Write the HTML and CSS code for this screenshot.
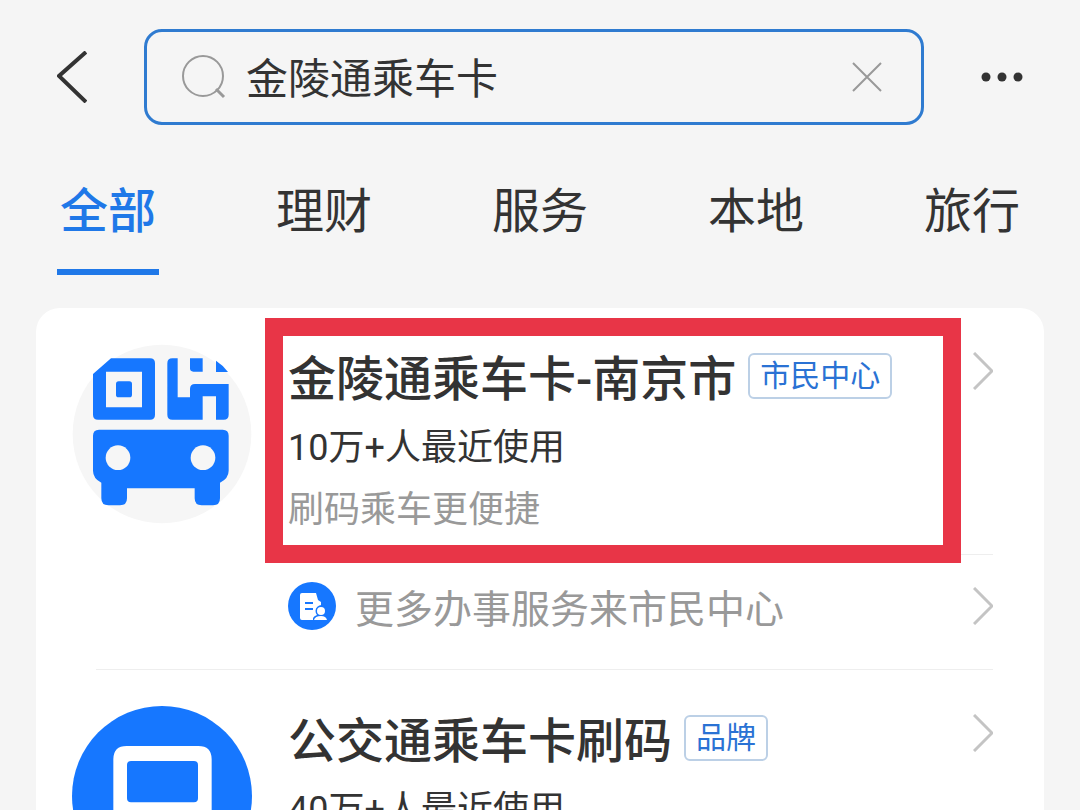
FILE: index.html
```html
<!DOCTYPE html>
<html lang="zh-CN">
<head>
    <meta charset="UTF-8">
    <meta name="viewport" content="width=device-width, initial-scale=1.0">
    <title>搜索</title>
    <link rel="stylesheet" href="styles.css">
</head>
<body>
    <div class="page">
        <!-- Search header -->
        <header class="header">
            <button class="icon-btn" aria-label="返回">
                <svg width="30" height="52" viewBox="0 0 30 52"><path d="M29 1 L2 25 L29 51" fill="none" stroke="#333" stroke-width="4"/></svg>
            </button>
            <form class="search-box" role="search">
                <svg class="search-icon" width="44" height="44" viewBox="0 0 44 44" fill="none" stroke="#999" stroke-width="2">
                    <circle cx="21" cy="21" r="20"/>
                    <path d="M34 34 L42 42" stroke-width="3"/>
                </svg>
                <input class="search-input" type="text" aria-label="搜索" value="金陵通乘车卡">
                <button class="icon-btn" type="reset" aria-label="清除">
                    <svg width="32" height="32" viewBox="0 0 32 32"><path d="M2 2 L30 30 M30 2 L2 30" stroke="#999" stroke-width="2"/></svg>
                </button>
            </form>
            <button class="icon-btn" aria-label="更多">
                <svg width="42" height="10" viewBox="0 0 42 10" fill="#333"><circle cx="5" cy="5" r="4.5"/><circle cx="21" cy="5" r="4.5"/><circle cx="37" cy="5" r="4.5"/></svg>
            </button>
        </header>

        <!-- Category tabs -->
        <nav class="tabs">
            <a class="tab active" href="#all">全部</a>
            <a class="tab" href="#finance">理财</a>
            <a class="tab" href="#service">服务</a>
            <a class="tab" href="#local">本地</a>
            <a class="tab" href="#travel">旅行</a>
        </nav>

        <!-- Results -->
        <main class="results">
            <article class="result">
                <svg class="result-icon" viewBox="36 102 540 540">
                    <circle cx="306" cy="372" r="268" fill="#f6f6f6"/>
                    <g fill="#1677ff">
                        <path fill-rule="evenodd" d="M153 145 H270 Q285 145 285 160 V314 Q285 329 270 329 H114 Q99 329 99 314 V192 Z M138 185 V292 H246 V185 Z"/>
                        <rect x="168" y="214" width="48" height="48" rx="8"/>
                        <path d="M337 145 H353 V262 H390 V237 Q390 222 405 222 H506 V314 Q506 329 491 329 H468 V259 H428 V329 H337 Q322 329 322 314 V160 Q322 145 337 145 Z"/>
                        <path d="M390 145 H428 V185 H400 Q390 185 390 175 Z"/>
                        <path d="M468 152 Q490 166 504 186 H468 Z"/>
                        <path d="M117 359 H488 Q506 359 506 377 V482 Q506 505 480 518 V565 Q480 586 459 586 H425 Q404 586 404 565 V535 H201 V565 Q201 586 180 586 H145 Q124 586 124 565 V518 Q99 505 99 482 V377 Q99 359 117 359 Z"/>
                    </g>
                    <g fill="#f6f6f6"><circle cx="174" cy="443" r="37"/><circle cx="429" cy="443" r="37"/></g>
                </svg>
                <div class="result-body">
                    <div class="result-info highlight">
                        <h2 class="result-title">金陵通乘车卡-南京市<span class="tag">市民中心</span></h2>
                        <p class="result-count">10万+人最近使用</p>
                        <p class="result-desc">刷码乘车更便捷</p>
                    </div>
                    <svg class="chevron" width="20" height="38" viewBox="0 0 20 38"><path d="M1 1 L19 19 L1 37"/></svg>
                </div>
                <a class="more" href="#civic">
                    <svg width="48" height="48" viewBox="0 0 48 48">
                        <circle cx="24" cy="24" r="24" fill="#1677ff"/>
                        <path d="M14 11 H28 L30 18 L33 20 V38 H14 Q12 38 12 36 V13 Q12 11 14 11 Z" fill="#fff"/>
                        <path d="M17 21 H25 M17 27 H25" stroke="#1677ff" stroke-width="2"/>
                        <path d="M25 40 V36 Q26 34 29 33 A6 6 0 1 1 38 33 Q41 34 41 38 V40 Z" fill="#1677ff"/>
                        <circle cx="33" cy="29" r="4" fill="#fff"/>
                        <path d="M26 38 Q27 34 33 34 Q38 34 39 38 Z" fill="#fff"/>
                    </svg>
                    <span class="more-text">更多办事服务来市民中心</span>
                    <svg class="chevron" width="20" height="38" viewBox="0 0 20 38"><path d="M1 1 L19 19 L1 37"/></svg>
                </a>
            </article>

            <article class="result">
                <svg class="result-icon" viewBox="126 138 540 540">
                    <circle cx="396" cy="408" r="270" fill="#1677ff"/>
                    <path fill-rule="evenodd" fill="#fff" d="M290 258 H505 Q545 258 545 298 V550 H515 V580 H465 V550 H330 V580 H280 V550 H250 V298 Q250 258 290 258 Z M303 303 Q291 303 291 315 V415 Q291 427 303 427 H492 Q504 427 504 415 V315 Q504 303 492 303 Z"/>
                    <g fill="#1677ff"><circle cx="315" cy="490" r="20"/><circle cx="480" cy="490" r="20"/></g>
                </svg>
                <div class="result-body">
                    <div class="result-info">
                        <h2 class="result-title">公交通乘车卡刷码<span class="tag">品牌</span></h2>
                        <p class="result-count">40万+人最近使用</p>
                    </div>
                    <svg class="chevron" width="20" height="38" viewBox="0 0 20 38"><path d="M1 1 L19 19 L1 37"/></svg>
                </div>
            </article>
        </main>
    </div>
</body>
</html>
```
FILE: styles.css
```css
:root {
    --page-bg: #f5f5f5;
    --blue: #1f78e8;
    --text: #333333;
    --muted: #999999;
    --line: #eeeeee;
    --mark: #e83547;
}

* {
    box-sizing: border-box;
    margin: 0;
    padding: 0;
}

body {
    font-family: Roboto, "Noto Sans CJK SC", sans-serif;
    background: var(--page-bg);
    color: var(--text);
}

a {
    color: inherit;
    text-decoration: none;
}

svg {
    display: block;
    flex-shrink: 0;
}

.page {
    display: flex;
    flex-direction: column;
    height: 100vh;
    overflow: hidden;
}

/* Search header */
.header {
    display: flex;
    align-items: center;
    gap: 57px;
    padding: 29px 57px 0;
}

.icon-btn {
    border: none;
    background: none;
    cursor: pointer;
}

.search-box {
    flex: 1;
    min-width: 0;
    display: flex;
    align-items: center;
    gap: 20px;
    height: 96px;
    padding: 0 38px 0 35px;
    border: 3px solid #2f7bd0;
    border-radius: 18px;
}

.search-input {
    flex: 1;
    min-width: 0;
    padding-top: 6px;
    border: none;
    outline: none;
    background: none;
    color: var(--text);
    font-family: inherit;
    font-size: 42px;
    line-height: 60px;
}

/* Tabs */
.tabs {
    display: flex;
    justify-content: space-between;
    padding: 54px 57px 33px;
}

.tab {
    padding: 0 3px 24px;
    border-bottom: 6px solid transparent;
    font-size: 48px;
    line-height: 66px;
}

.tab.active {
    color: var(--blue);
    border-color: var(--blue);
    font-weight: 500;
}

/* Results card */
.results {
    flex: 1;
    margin: 0 36px;
    background: #fff;
    border-radius: 24px 24px 0 0;
}

.result {
    display: grid;
    grid-template-columns: 180px 1fr;
    column-gap: 36px;
    padding: 34px 51px 0 36px;
}

.result + .result {
    position: relative;
    padding-top: 35px;
}

/* Divider starts inside the icon column */
.result + .result::before {
    content: "";
    position: absolute;
    top: 0;
    left: 60px;
    right: 51px;
    border-top: 1px solid var(--line);
}

.result-icon {
    width: 180px;
    height: 180px;
    margin-top: 2px;
}

.result-body {
    display: flex;
    justify-content: space-between;
    padding-bottom: 12px;
    border-bottom: 1px solid var(--line);
}

.result-body .chevron {
    margin-top: 10px;
}

.result-title {
    display: flex;
    align-items: flex-start;
    gap: 12px;
    font-size: 48px;
    font-weight: 500;
    line-height: 76px;
    white-space: nowrap;
}

.tag {
    margin-top: 11px;
    padding: 0 10px;
    border: 2px solid #bcd0e6;
    border-radius: 6px;
    color: #2a72d4;
    font-size: 30px;
    font-weight: normal;
    line-height: 42px;
}

.result-count {
    font-size: 36px;
    line-height: 60px;
}

.result-desc {
    color: var(--muted);
    font-size: 36px;
    line-height: 64px;
}

/* Red frame around the result */
.highlight {
    position: relative;
    flex: 1;
}

.highlight::after {
    content: "";
    position: absolute;
    inset: -24px 12px -21px -23px;
    border: 18px solid var(--mark);
}

.more {
    grid-column: 2;
    display: flex;
    align-items: center;
    gap: 19px;
    height: 101px;
    margin-bottom: 13px;
    color: var(--muted);
    font-size: 39px;
}

.more-text {
    flex: 1;
}

.chevron {
    fill: none;
    stroke: #c4c4c4;
    stroke-width: 3;
}
```
